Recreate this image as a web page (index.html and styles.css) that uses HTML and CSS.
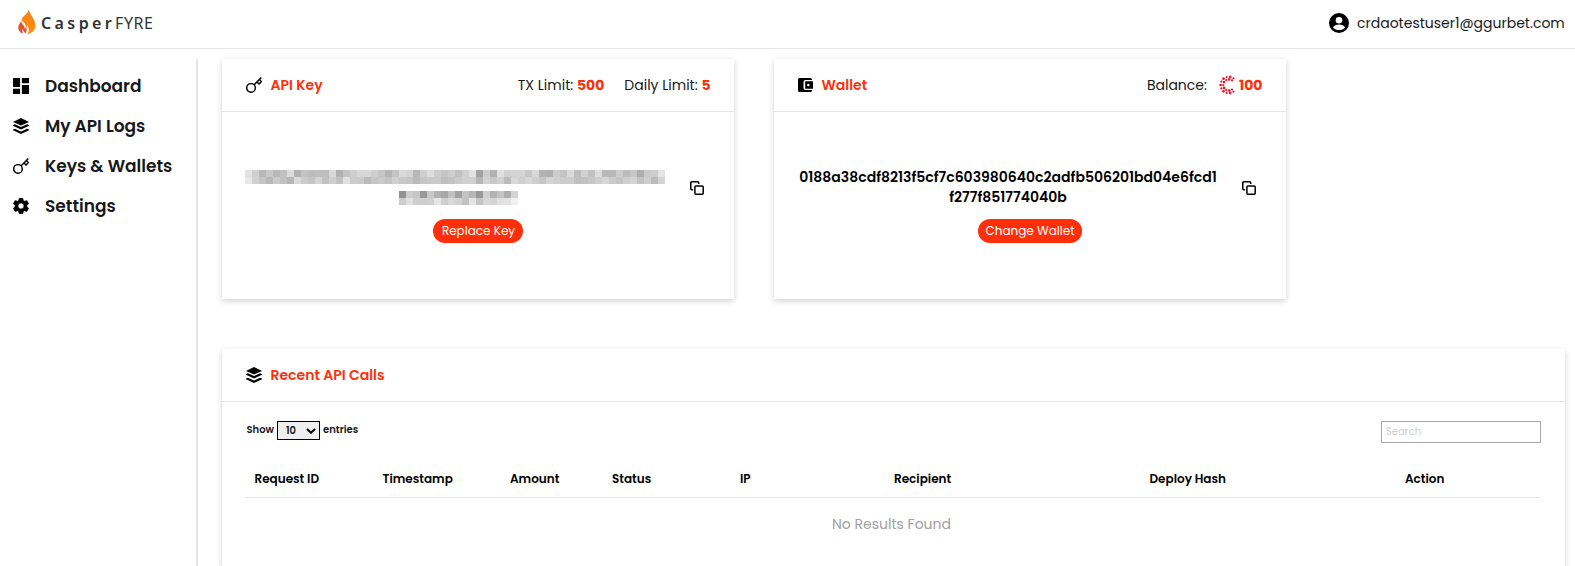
FILE: index.html
```html
<!DOCTYPE html>
<html lang="en">
<head>
<meta charset="utf-8">
<title>CasperFYRE</title>
<link rel="stylesheet" href="styles.css">
</head>
<body>
<svg width="0" height="0" class="defs">
  <symbol id="i-dash" viewBox="0 0 16 16"><path d="M0 0h7.1v8.9H0zM8.9 0H16v5.3H8.9zM8.9 7.1H16V16H8.9zM0 10.7h7.1V16H0z"/></symbol>
  <symbol id="i-layers" viewBox="0 0 16 16"><path d="M8 0l8 3.9-8 3.6-8-3.6z"/><path d="M0 7.2l1.9-.9L8 9.1l6.1-2.800 1.9.9v.6l-8 3.700-8-3.700z"/><path d="M0 11.6l1.9-.9L8 13.5l6.1-2.800 1.9.9v.6L8 16l-8-3.800z"/></symbol>
  <symbol id="i-key" viewBox="0 0 16 16"><g fill="none" stroke="#000" stroke-width="1.45"><circle cx="5" cy="10.9" r="4.300"/><path d="M8 7.900L15.300.6M10.900 5l2.200 1.900 2.300-2.300-2-2"/></g></symbol>
  <symbol id="i-gear" viewBox="2.200 2.200 19.600 19.600"><path d="M19.14 12.94c.04-.3.06-.61.06-.94 0-.32-.02-.64-.07-.94l2.03-1.58a.49.49 0 0 0 .12-.61l-1.92-3.32a.49.49 0 0 0-.59-.22l-2.39.96a7.03 7.03 0 0 0-1.62-.94l-.36-2.54a.48.48 0 0 0-.48-.41h-3.84a.47.47 0 0 0-.47.41l-.36 2.54c-.59.24-1.13.57-1.62.94l-2.39-.96a.48.48 0 0 0-.59.22L2.74 8.87a.47.47 0 0 0 .12.61l2.03 1.58c-.05.3-.09.63-.09.94s.02.64.07.94l-2.03 1.58a.49.49 0 0 0-.12.61l1.92 3.32c.12.22.37.29.59.22l2.39-.96c.5.38 1.03.7 1.62.94l.36 2.54c.05.24.24.41.48.41h3.84c.24 0 .44-.17.47-.41l.36-2.54c.59-.24 1.13-.56 1.62-.94l2.39.96c.22.08.47 0 .59-.22l1.92-3.32a.47.47 0 0 0-.12-.61zM12 15.6a3.6 3.6 0 1 1 0-7.2 3.6 3.6 0 0 1 0 7.2z" stroke="#000" stroke-width=".7"/></symbol>
  <symbol id="i-copy" viewBox="0 0 14 14"><g fill="none" stroke="#000" stroke-width="1.500"><rect x="4.900" y="4.900" width="8.300" height="8.300" rx="1"/><path d="M3 8.700H1.800a1 1 0 0 1-1-1V1.800a1 1 0 0 1 1-1h5.900a1 1 0 0 1 1 1V3"/></g></symbol>
</svg>
<header class="top">
  <div class="brand">
    <svg class="flame" viewBox="0 0 18 26"><defs><linearGradient id="fg" x1="0" y1="0" x2="0" y2="1"><stop offset="0" stop-color="#f58220"/><stop offset=".75" stop-color="#ff8a0a"/><stop offset="1" stop-color="#ff9d1c"/></linearGradient></defs><path fill="url(#fg)" d="M10.800 0C10.800 5 18 10 17.300 17.500c-.4 4-3.300 7-8.300 8 2.500-3 2.300-5.500.3-9.500-.4 1.500-.8 2-1.500 2.500.2-3.500-1.800-5.500-4.300-7C3.600 7 10.500 5 10.800 0z"/><path fill="#f04e28" d="M3.300 12c0 3 3.500 4.500 3.600 8 .7-.8.9-1.800.8-2.800 1.500 3 1 5.300-.5 7.300C6.200 22.500 5 21.500 4.500 19.500c-.4 1.800-.2 3.500.6 5.200C-.8 22.500-1 17 3.300 12z"/></svg>
    <span class="casper">Casper</span><span class="fyre">FYRE</span>
  </div>
  <div class="user">
    <svg class="avatar" viewBox="0 0 20 20"><circle cx="10" cy="10" r="10"/><circle cx="10" cy="7.200" r="3.300" fill="#fff"/><path d="M4 14.500c1-2.300 3.500-3 6-3s5 .7 6 3c-1.400 1.900-3.600 2.600-6 2.600s-4.600-.7-6-2.600z" fill="#fff"/></svg>
    <span class="email">crdaotestuser1@ggurbet.com</span>
  </div>
</header>
<div class="shell">
  <nav class="side">
    <a class="nav"><svg class="ic"><use href="#i-dash"/></svg><span>Dashboard</span></a>
    <a class="nav"><svg class="ic"><use href="#i-layers"/></svg><span>My API Logs</span></a>
    <a class="nav"><svg class="ic"><use href="#i-key"/></svg><span>Keys &amp; Wallets</span></a>
    <a class="nav"><svg class="ic"><use href="#i-gear"/></svg><span>Settings</span></a>
  </nav>
  <main class="main">
    <div class="cards">
      <section class="card small">
        <div class="head"><svg class="ic"><use href="#i-key"/></svg><h2>API Key</h2>
          <div class="stats"><span class="tx">TX Limit: <b>500</b></span><span>Daily Limit: <b>5</b></span></div></div>
        <div class="body">
          <div class="row"><div class="masked"><svg id="mask" width="420" height="36" shape-rendering="crispEdges"></svg></div><svg class="copy"><use href="#i-copy"/></svg></div>
          <button class="pill replace">Replace Key</button>
        </div>
      </section>
      <section class="card small">
        <div class="head"><svg class="wallet" viewBox="0 0 15 14"><path d="M1.500 0h11A1.500 1.500 0 0 1 14 1.500V2H7.500A2 2 0 0 0 5.500 4v6a2 2 0 0 0 2 2H14v.5a1.500 1.500 0 0 1-1.500 1.500h-11A1.500 1.500 0 0 1 0 12.500v-11A1.500 1.500 0 0 1 1.500 0z"/><path fill-rule="evenodd" d="M7.200 3.300H15v7.400H7.200zM10.300 5.800a1.200 1.200 0 1 0 0 2.400 1.200 1.200 0 0 0 0-2.400z"/></svg><h2>Wallet</h2>
          <div class="stats"><span>Balance:</span><svg class="coin" id="coin" viewBox="0 0 16 20"></svg><b>100</b></div></div>
        <div class="body">
          <div class="row"><div class="hash"><span>0188a38cdf8213f5cf7c603980640c2adfb506201bd04e6fcd1</span><span>f277f851774040b</span></div><svg class="copy"><use href="#i-copy"/></svg></div>
          <button class="pill change">Change Wallet</button>
        </div>
      </section>
    </div>
    <section class="card calls">
      <div class="head"><svg class="ic"><use href="#i-layers"/></svg><h2>Recent API Calls</h2></div>
      <div class="content">
        <div class="tools">
          <div class="show"><span class="s1">Show</span><span class="select"><span>10</span><svg width="10" height="6" viewBox="0 0 10 6"><path d="M1 1l4 3.700L9 1" fill="none" stroke="#000" stroke-width="2"/></svg></span><span class="s2">entries</span></div>
          <input class="search" placeholder="Search">
        </div>
        <div class="thead"><span>Request ID</span><span>Timestamp</span><span>Amount</span><span>Status</span><span>IP</span><span>Recipient</span><span>Deploy Hash</span><span>Action</span></div>
        <div class="none">No Results Found</div>
      </div>
    </section>
  </main>
</div>
<script src="app.js"></script>
</body>
</html>
```
FILE: styles.css
```css
* { box-sizing: border-box; }
body { margin: 0; height: 566px; overflow: hidden; background: #fff; color: #17181a; font: 14px/20px Poppins, Inter, sans-serif; }
.defs { position: absolute; }
.top { height: 49px; border-bottom: 1px solid #e5e5ec; display: flex; justify-content: space-between; padding: 0 10px 0 18px; }
.brand { display: flex; align-items: center; height: 46px; color: #333; font: 16px/24px "Noto Sans", sans-serif; }
.flame { width: 18px; height: 26px; margin: -2px 5px 0 0; }
.casper { width: 74px; font-weight: 600; letter-spacing: 3.4px; font-size: 16px; white-space: nowrap; }
.fyre { font-size: 16px; letter-spacing: .6px; }
.user { display: flex; align-items: center; height: 46px; }
.avatar { width: 20px; height: 20px; margin-right: 8px; }
.email { width: 208px; white-space: nowrap; }
.shell { display: flex; padding-top: 10px; }
.side { width: 198px; height: 507px; flex: none; border-right: 2px solid #e5e5ea; padding: 7px 0 0 13px; }
.nav { display: flex; align-items: center; height: 40px; font-size: 17px; font-weight: 600; white-space: nowrap; }
.ic { width: 16px; height: 16px; flex: none; }
.nav .ic { margin-right: 16px; }
.main { width: 1343px; margin-left: 24px; }
.cards { display: flex; gap: 40px; }
.card { background: #fff; box-shadow: 0 2px 6px rgba(0,0,0,.18); }
.small { width: 512px; height: 240px; }
.head { height: 53px; display: flex; align-items: center; border-bottom: 1px solid #e6e6e6; padding: 0 23.5px 0 24px; }
.head h2 { margin: 0 0 0 8.5px; font-size: 14px; line-height: 20px; font-weight: 600; color: #ff2f0a; white-space: nowrap; }
.head b { color: #ff2f0a; font-weight: 700; }
.stats { margin-left: auto; display: flex; align-items: center; white-space: nowrap; }
.tx { margin-right: 20px; }
.wallet { width: 15px; height: 14px; }
.coin { width: 17px; height: 20px; margin: -1px 3px 0 12px; }
.body { height: 187px; padding: 55px 24px 0; display: flex; flex-direction: column; align-items: center; }
.row { width: 464px; height: 40px; display: flex; justify-content: space-between; align-items: center; }
.masked { width: 420px; height: 36px; margin: 2px 0 0 -1px; }
.masked svg { display: block; }
.copy { width: 14px; height: 14px; margin: 1px 6.5px 0 0; }
.hash { width: 420px; display: flex; flex-direction: column; align-items: center; font-weight: 600; color: #000; white-space: nowrap; }
.pill { height: 24px; border: 0; border-radius: 12px; margin-top: 12px; background: #ff2f0a; color: #fff; font: 12px/24px Poppins, Inter, sans-serif; padding: 0; white-space: nowrap; }
.replace { width: 90px; padding-left: 1px; }
.change { width: 104px; }
.calls { margin-top: 50px; height: 218px; clip-path: inset(-8px -8px 0 -8px); }
.content { padding: 19px 24px 0; }
.tools { display: flex; justify-content: space-between; align-items: flex-start; height: 39px; }
.show { display: flex; height: 19px; align-items: center; font-size: 10px; font-weight: 600; }
.s1, .s2 { margin-top: -2px; }
.s1 { width: 31px; padding-left: .5px; }
.s2 { margin-left: 3px; }
.select { width: 43px; height: 19px; border: 1px solid #000; background: #efefef; display: flex; align-items: center; justify-content: space-between; padding: 0 3px 0 8px; }
.search { width: 160px; height: 22px; border: 1px solid #a6a6a6; padding: 0 4px; font: 10px Poppins, Inter, sans-serif; outline: 0; }
.search::placeholder { color: #d0d0d0; }
.thead { display: grid; grid-template-columns: 128px 127.5px 102px 128px 154px 255.5px 255.5px 1fr; padding: 1px 8px 0 8.5px; height: 38px; align-items: center; border-bottom: 1px solid #e6e6e6; font-size: 12px; font-weight: 600; color: #000; }
.none { text-align: center; padding: 16px 4px 0 0; color: #a0a0a0; }
```
FILE: app.js
```js
const NS = "http://www.w3.org/2000/svg";
function add(parent, tag, attrs) {
  const el = document.createElementNS(NS, tag);
  for (const k in attrs) el.setAttribute(k, attrs[k]);
  parent.appendChild(el);
}
const mask = document.getElementById("mask");
const rows = [
  [0, 0, "e2 cf b8 c8 b9 c2 dc b1 c3 bc be bd d9 b2 c4 ce d7 d7 cf c5 b5 c5 da d5 b6 cf dd cc c5 cd c2 d0 e2 a2 cc b1 e0 d1 d4 d5 c6 d8 b3 b1 cb c5 d9 bd d1 c1 dc b8 b7 cb bd c5 ad c9 cd e5"],
  [0, 7, "e8 d1 c4 b8 cb c1 b6 db cc c5 d4 c2 cf c2 e1 cc cb ba c6 ca c4 cf c8 c5 ba c6 c9 ca be c3 ca d0 cf b6 d2 c9 d1 ba d8 cf d6 ce c6 d5 d0 cc cc c0 c2 c8 ce d6 cb c4 ce d4 c3 cf bc d4"],
  [154, 21, "92 cc c5 99 c8 b2 a7 c1 a1 c3 b7 98 cf b3 c3 ae d3"],
  [154, 28, "cd df cf ce d0 e5 cf d8 d2 c3 e4 c4 d7 d5 e0 e3 f0"]
];
for (const [x0, y, data] of rows) {
  data.split(" ").forEach((h, i) => {
    add(mask, "rect", { x: x0 + i * 7, y, width: 7, height: 7, fill: "#" + h + h + h });
  });
}
const coin = document.getElementById("coin");
for (let ring = 0; ring < 2; ring++) {
  const r = ring ? 5.6 : 8.2;
  const n = ring ? 9 : 11;
  for (let i = 0; i < n; i++) {
    const a = (55 + i * 250 / (n - 1)) * Math.PI / 180;
    add(coin, "circle", { cx: 9.3 + r * Math.cos(a), cy: 10 + r * Math.sin(a), r: i % 2 ? 1.35 : 1.1, fill: "#f7142b" });
  }
}
```
